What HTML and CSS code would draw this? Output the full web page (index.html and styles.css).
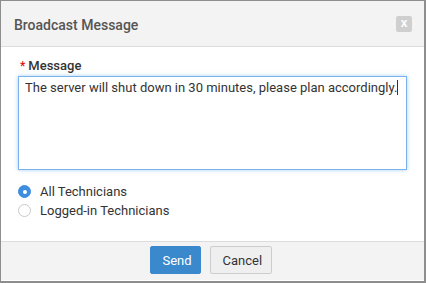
FILE: index.html
```html
<!DOCTYPE html>
<html lang="en">
<head>
<meta charset="UTF-8">
<title>Broadcast Message</title>
<link rel="stylesheet" href="styles.css">
</head>
<body>

<div class="dialog">
    <div class="dialog-header">
        <div class="title">Broadcast Message</div>
        <span class="close-btn">x</span>
    </div>

    <div class="dialog-body">
        <div class="field-label"><span class="required">*</span>Message</div>
        <div class="message-box">The server will shut down in 30 minutes, please plan accordingly.<span class="caret"></span></div>

        <div class="radio-group">
            <label class="radio-row"><span class="radio checked"></span>All Technicians</label>
            <label class="radio-row"><span class="radio"></span>Logged-in Technicians</label>
        </div>
    </div>

    <div class="dialog-footer">
        <button class="btn btn-primary">Send</button>
        <button class="btn btn-default">Cancel</button>
    </div>
</div>

</body>
</html>
```

FILE: styles.css
```css
body, html {
    margin: 0;
    background-color: #8e8e8e;
    font-family: 'Roboto', sans-serif;
}

.dialog {
    width: 423px;
    height: 280px;
    margin: 1px 2px 2px 1px;
    background-color: white;
    display: flex;
    flex-direction: column;
    box-sizing: border-box;
    border-bottom: 1px solid white;
}

/* 상단 */
.dialog-header {
    height: 46px;
    background-color: #f3f3f3;
    border-bottom: 1px solid #dcdcdc;
    display: flex;
    justify-content: space-between;
    align-items: center;
    padding: 0 12px 0 13px;
    box-sizing: border-box;
    flex-shrink: 0;
}

.dialog-header .title {
    font-size: 14px;
    font-weight: 500;
    color: #555;
    padding-top: 2px;
}

.close-btn {
    width: 16px;
    height: 16px;
    background-color: #cfcfcf;
    color: white;
    border-radius: 2px;
    font-size: 12px;
    font-weight: bold;
    line-height: 15px;
    text-align: center;
    font-family: 'Liberation Sans', sans-serif;
}

.dialog-body {
    flex: 1;
    padding: 10px 17px 0 17px;
}

.field-label {
    font-size: 13px;
    font-weight: 500;
    color: #333;
    height: 17px;
    display: flex;
    align-items: center;
}

.required {
    color: #e01010;
    font-size: 12px;
    margin-right: 3px;
    margin-left: 2px;
}

.message-box {
    height: 94px;
    margin-top: 2px;
    border: 1px solid #7ab3ec;
    box-shadow: 0 0 4px rgba(102, 175, 233, 0.6);
    padding: 3px 6px;
    box-sizing: border-box;
    font-size: 13px;
    color: #333;
    line-height: 16px;
}

.caret {
    display: inline-block;
    width: 1px;
    height: 15px;
    background-color: #333;
    vertical-align: -3px;
}

.radio-group {
    margin-top: 13px;
    display: flex;
    flex-direction: column;
    gap: 2px;
}

.radio-row {
    display: flex;
    align-items: center;
    font-size: 13px;
    color: #333;
    height: 17px;
}

.radio {
    width: 11px;
    height: 11px;
    border-radius: 50%;
    border: 1px solid #c8c8c8;
    background-color: white;
    margin-right: 9px;
    box-sizing: content-box;
    position: relative;
}

.radio.checked {
    border-color: #3d8ee0;
    background-color: #3d8ee0;
}

.radio.checked::after {
    content: "";
    position: absolute;
    width: 4px;
    height: 4px;
    border-radius: 50%;
    background-color: white;
    left: 3.5px;
    top: 3.5px;
}

/* 하단 */
.dialog-footer {
    height: 39px;
    background-color: #f3f3f3;
    border-top: 1px solid #dcdcdc;
    display: flex;
    justify-content: center;
    align-items: center;
    gap: 9px;
    padding-right: 4px;
    padding-bottom: 2px;
    box-sizing: border-box;
    flex-shrink: 0;
}

.btn {
    height: 28px;
    font-family: 'Roboto', sans-serif;
    font-size: 13px;
    padding: 0 12px;
    border-radius: 2px;
    cursor: pointer;
}

.btn-primary {
    background-color: #3a89cc;
    border: 1px solid #3a89cc;
    color: white;
    width: 51px;
}

.btn-default {
    background-color: #efefef;
    border: 1px solid #cdcdcd;
    color: #333;
    width: 62px;
}
```
